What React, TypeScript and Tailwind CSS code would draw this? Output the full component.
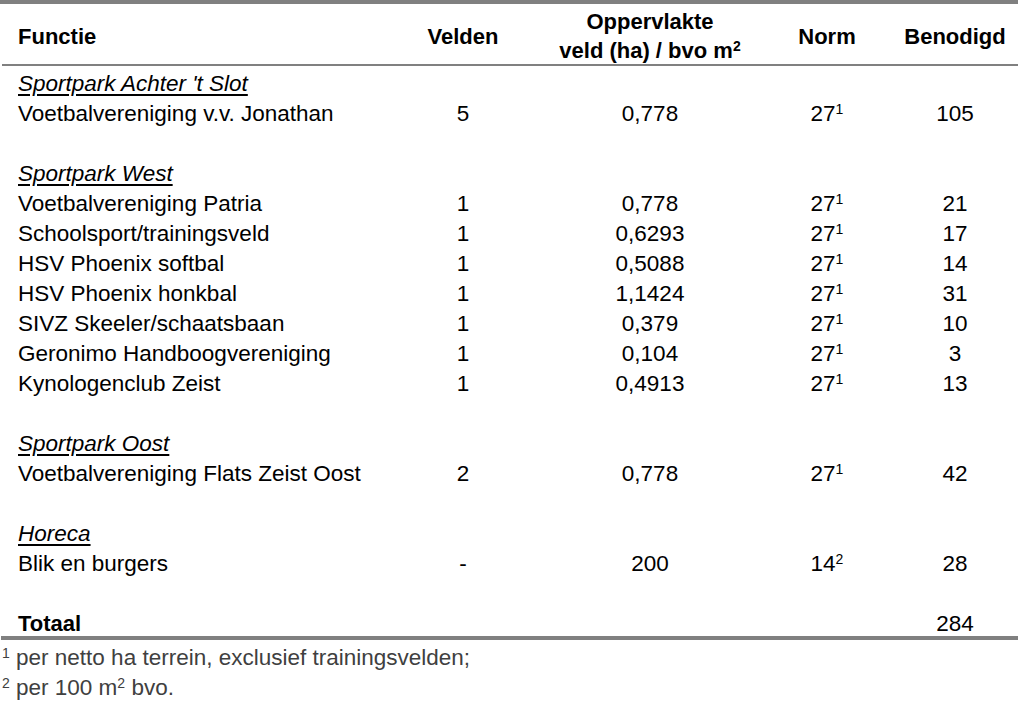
import React from 'react';

type Row =
  | { kind: 'group'; label: string }
  | { kind: 'blank' }
  | { kind: 'item'; name: string; velden: string; opp: string; norm: string; sup: string; ben: string };

const rows: Row[] = [
  { kind: 'group', label: "Sportpark Achter 't Slot" },
  { kind: 'item', name: 'Voetbalvereniging v.v. Jonathan', velden: '5', opp: '0,778', norm: '27', sup: '1', ben: '105' },
  { kind: 'blank' },
  { kind: 'group', label: 'Sportpark West' },
  { kind: 'item', name: 'Voetbalvereniging Patria', velden: '1', opp: '0,778', norm: '27', sup: '1', ben: '21' },
  { kind: 'item', name: 'Schoolsport/trainingsveld', velden: '1', opp: '0,6293', norm: '27', sup: '1', ben: '17' },
  { kind: 'item', name: 'HSV Phoenix softbal', velden: '1', opp: '0,5088', norm: '27', sup: '1', ben: '14' },
  { kind: 'item', name: 'HSV Phoenix honkbal', velden: '1', opp: '1,1424', norm: '27', sup: '1', ben: '31' },
  { kind: 'item', name: 'SIVZ Skeeler/schaatsbaan', velden: '1', opp: '0,379', norm: '27', sup: '1', ben: '10' },
  { kind: 'item', name: 'Geronimo Handboogvereniging', velden: '1', opp: '0,104', norm: '27', sup: '1', ben: '3' },
  { kind: 'item', name: 'Kynologenclub Zeist', velden: '1', opp: '0,4913', norm: '27', sup: '1', ben: '13' },
  { kind: 'blank' },
  { kind: 'group', label: 'Sportpark Oost' },
  { kind: 'item', name: 'Voetbalvereniging Flats Zeist Oost', velden: '2', opp: '0,778', norm: '27', sup: '1', ben: '42' },
  { kind: 'blank' },
  { kind: 'group', label: 'Horeca' },
  { kind: 'item', name: 'Blik en burgers', velden: '-', opp: '200', norm: '14', sup: '2', ben: '28' },
  { kind: 'blank' },
];

const cols = 'grid grid-cols-[400px_126px_248px_106px_138px]';
const sup = 'text-[14px] align-baseline relative -top-[7px]';

export default function App() {
  return (
    <div className="w-[1018px] h-[705px] bg-white text-black text-[22.5px] font-['Liberation_Sans',Arial,sans-serif] overflow-hidden">
      <div className="h-[4px] bg-[#808080]" />

      {/* Header */}
      <div className={`${cols} h-[60px] pt-[3px] items-center font-bold text-[22px] leading-[29px]`}>
        <div className="pl-[18px]">Functie</div>
        <div className="text-center">Velden</div>
        <div className="text-center">
          Oppervlakte
          <br />
          veld (ha) / bvo m<sup className={sup}>2</sup>
        </div>
        <div className="text-center">Norm</div>
        <div className="text-center pl-3">Benodigd</div>
      </div>
      <div className="ml-[2px] h-[2px] bg-[#808080]" />

      {/* Body */}
      <div className="pt-[3px]">
        {rows.map((r, i) => {
          if (r.kind === 'blank') return <div key={i} className="h-[30px]" />;
          if (r.kind === 'group')
            return (
              <div key={i} className="h-[30px] leading-[30px] pl-[18px] italic underline underline-offset-[3px]">
                {r.label}
              </div>
            );
          return (
            <div key={i} className={`${cols} h-[30px] leading-[30px]`}>
              <div className="pl-[18px] whitespace-nowrap">{r.name}</div>
              <div className="text-center">{r.velden}</div>
              <div className="text-center">{r.opp}</div>
              <div className="text-center">
                {r.norm}
                <sup className={sup}>{r.sup}</sup>
              </div>
              <div className="text-center pl-3">{r.ben}</div>
            </div>
          );
        })}
        <div className={`${cols} h-[27px] leading-[30px]`}>
          <div className="pl-[18px] font-bold text-[22px]">Totaal</div>
          <div />
          <div />
          <div />
          <div className="text-center pl-3">284</div>
        </div>
      </div>
      <div className="ml-[1px] h-[4px] bg-[#808080]" />

      {/* Footnotes */}
      <div className="text-[#404040] leading-[30px] pt-[3px]">
        <div className="pl-[2px]">
          <sup className={sup}>1</sup> per netto ha terrein, exclusief trainingsvelden;
        </div>
        <div className="pl-[2px]">
          <sup className={sup}>2</sup> per 100 m<sup className={sup}>2</sup> bvo.
        </div>
      </div>
    </div>
  );
}
